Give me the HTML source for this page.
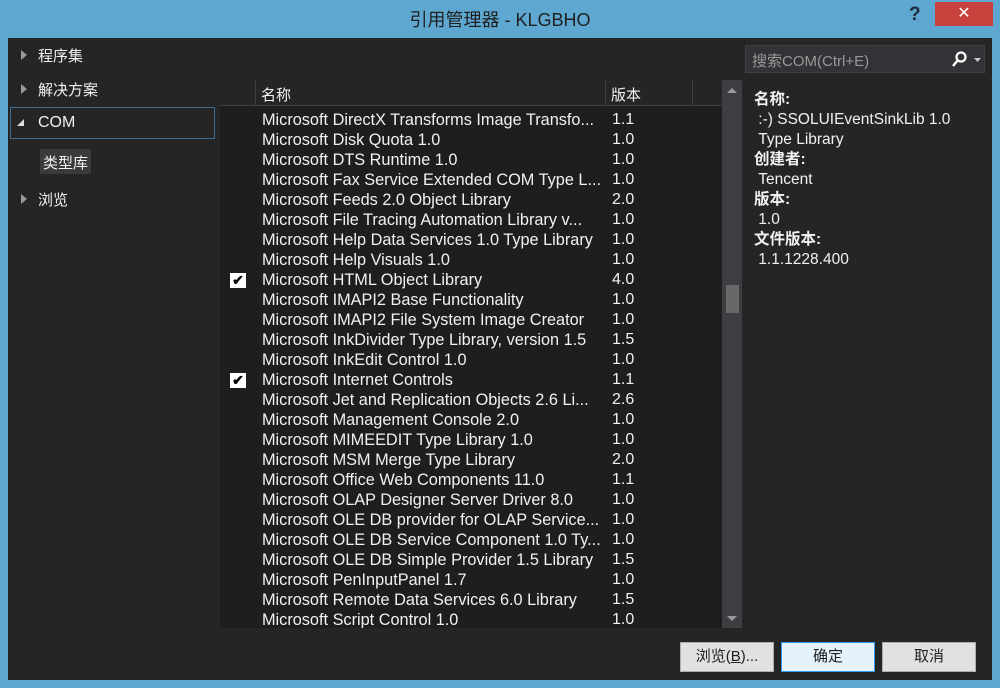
<!DOCTYPE html>
<html><head><meta charset="utf-8"><style>
*{margin:0;padding:0;box-sizing:border-box}
body{width:1000px;height:688px;background:#5ea7d1;font-family:"Liberation Sans","Noto Sans CJK SC",sans-serif;color:#f1f1f1;font-size:15px;position:relative;overflow:hidden}
.a{position:absolute;white-space:nowrap}
#main{position:absolute;left:8px;top:38px;width:984px;height:642px;background:#252526}
.row{position:absolute;left:262px;height:20px;line-height:20px;font-size:16.3px;margin-top:2px}
.v{position:absolute;left:612px;height:20px;line-height:20px;font-size:16px;margin-top:2px}
.tri{position:absolute;width:0;height:0;border-top:5px solid transparent;border-bottom:5px solid transparent;border-left:6px solid #999}
.btn{position:absolute;top:642px;height:30px;width:94px;background:#e1e1e1;color:#1e1e1e;border:1px solid #adadad;text-align:center;line-height:28px;font-size:15px}
.chk{position:absolute;left:230px;width:16px;height:15px;background:#fff;color:#000;font-size:14px;line-height:15px;text-align:center;font-weight:bold;margin-top:2px}
</style></head><body>
<div class="a" style="left:0;top:6px;width:1000px;text-align:center;font-size:18px;color:#1f1f1f">引用管理器 - KLGBHO</div>
<div class="a" style="left:909px;top:4px;font-size:19px;font-weight:bold;color:#1e2a38">?</div>
<div class="a" style="left:935px;top:2px;width:58px;height:24px;background:#c7423c;color:#fff;text-align:center;line-height:24px;font-size:16px">✕</div>
<div id="main"></div>
<div class="tri" style="left:21px;top:50px"></div><div class="a" style="left:38px;top:45px">程序集</div>
<div class="tri" style="left:21px;top:84px"></div><div class="a" style="left:38px;top:79px">解决方案</div>
<div class="a" style="left:10px;top:107px;width:205px;height:32px;border:1px solid #3e6d94"></div>
<div class="a" style="left:17px;top:119px;width:0;height:0;border-left:7px solid transparent;border-bottom:7px solid #ddd"></div>
<div class="a" style="left:38px;top:114px;font-size:16px">COM</div>
<div class="a" style="left:40px;top:149px;width:51px;height:25px;background:#3a3a3c"></div>
<div class="a" style="left:43px;top:152px">类型库</div>
<div class="tri" style="left:21px;top:194px"></div><div class="a" style="left:38px;top:189px">浏览</div>
<div class="a" style="left:220px;top:80px;width:502px;height:548px;background:#1e1e1e"></div>
<div class="a" style="left:220px;top:80px;width:502px;height:26px;background:#252526;border-bottom:1px solid #3f3f46"></div>
<div class="a" style="left:255px;top:80px;width:1px;height:26px;background:#3f3f46"></div>
<div class="a" style="left:605px;top:80px;width:1px;height:26px;background:#3f3f46"></div>
<div class="a" style="left:692px;top:80px;width:1px;height:26px;background:#3f3f46"></div>
<div class="a" style="left:261px;top:84px">名称</div>
<div class="a" style="left:611px;top:84px">版本</div>
<div class="a" style="left:722px;top:80px;width:20px;height:548px;background:#3e3e42"></div>
<div class="a" style="left:727px;top:88px;border-left:5px solid transparent;border-right:5px solid transparent;border-bottom:5px solid #999;width:0;height:0"></div>
<div class="a" style="left:727px;top:616px;border-left:5px solid transparent;border-right:5px solid transparent;border-top:5px solid #999;width:0;height:0"></div>
<div class="a" style="left:726px;top:285px;width:13px;height:28px;background:#686868"></div>
<div class="chk" style="top:271px">✔</div>
<div class="chk" style="top:371px">✔</div>
<div class="row" style="top:108px">Microsoft DirectX Transforms Image Transfo...</div><div class="v" style="top:108px">1.1</div>
<div class="row" style="top:128px">Microsoft Disk Quota 1.0</div><div class="v" style="top:128px">1.0</div>
<div class="row" style="top:148px">Microsoft DTS Runtime 1.0</div><div class="v" style="top:148px">1.0</div>
<div class="row" style="top:168px">Microsoft Fax Service Extended COM Type L...</div><div class="v" style="top:168px">1.0</div>
<div class="row" style="top:188px">Microsoft Feeds 2.0 Object Library</div><div class="v" style="top:188px">2.0</div>
<div class="row" style="top:208px">Microsoft File Tracing Automation Library v...</div><div class="v" style="top:208px">1.0</div>
<div class="row" style="top:228px">Microsoft Help Data Services 1.0 Type Library</div><div class="v" style="top:228px">1.0</div>
<div class="row" style="top:248px">Microsoft Help Visuals 1.0</div><div class="v" style="top:248px">1.0</div>
<div class="row" style="top:268px">Microsoft HTML Object Library</div><div class="v" style="top:268px">4.0</div>
<div class="row" style="top:288px">Microsoft IMAPI2 Base Functionality</div><div class="v" style="top:288px">1.0</div>
<div class="row" style="top:308px">Microsoft IMAPI2 File System Image Creator</div><div class="v" style="top:308px">1.0</div>
<div class="row" style="top:328px">Microsoft InkDivider Type Library, version 1.5</div><div class="v" style="top:328px">1.5</div>
<div class="row" style="top:348px">Microsoft InkEdit Control 1.0</div><div class="v" style="top:348px">1.0</div>
<div class="row" style="top:368px">Microsoft Internet Controls</div><div class="v" style="top:368px">1.1</div>
<div class="row" style="top:388px">Microsoft Jet and Replication Objects 2.6 Li...</div><div class="v" style="top:388px">2.6</div>
<div class="row" style="top:408px">Microsoft Management Console 2.0</div><div class="v" style="top:408px">1.0</div>
<div class="row" style="top:428px">Microsoft MIMEEDIT Type Library 1.0</div><div class="v" style="top:428px">1.0</div>
<div class="row" style="top:448px">Microsoft MSM Merge Type Library</div><div class="v" style="top:448px">2.0</div>
<div class="row" style="top:468px">Microsoft Office Web Components 11.0</div><div class="v" style="top:468px">1.1</div>
<div class="row" style="top:488px">Microsoft OLAP Designer Server Driver 8.0</div><div class="v" style="top:488px">1.0</div>
<div class="row" style="top:508px">Microsoft OLE DB provider for OLAP Service...</div><div class="v" style="top:508px">1.0</div>
<div class="row" style="top:528px">Microsoft OLE DB Service Component 1.0 Ty...</div><div class="v" style="top:528px">1.0</div>
<div class="row" style="top:548px">Microsoft OLE DB Simple Provider 1.5 Library</div><div class="v" style="top:548px">1.5</div>
<div class="row" style="top:568px">Microsoft PenInputPanel 1.7</div><div class="v" style="top:568px">1.0</div>
<div class="row" style="top:588px">Microsoft Remote Data Services 6.0 Library</div><div class="v" style="top:588px">1.5</div>
<div class="row" style="top:608px;height:18px;overflow:hidden">Microsoft Script Control 1.0</div><div class="v" style="top:608px;height:18px;overflow:hidden">1.0</div>
<div class="a" style="left:745px;top:45px;width:240px;height:28px;background:#333337;border:1px solid #3f3f46"></div>
<div class="a" style="left:752px;top:50px;color:#999;font-size:15px">搜索COM(Ctrl+E)</div>
<svg class="a" style="left:948px;top:50px" width="36" height="18"><circle cx="13" cy="7" r="4.5" fill="none" stroke="#fff" stroke-width="2.2"/><line x1="10" y1="10" x2="5" y2="16" stroke="#fff" stroke-width="2.5"/><path d="M26 8h7l-3.5 4z" fill="#ccc"/></svg>
<div class="a" style="left:754px;top:90px;line-height:20px;font-size:15.5px">
<b>名称:</b><br>&nbsp;:-) SSOLUIEventSinkLib 1.0<br>&nbsp;Type Library<br><b>创建者:</b><br>&nbsp;Tencent<br><b>版本:</b><br>&nbsp;1.0<br><b>文件版本:</b><br>&nbsp;1.1.1228.400</div>
<div class="btn" style="left:680px">浏览(<u>B</u>)...</div>
<div class="btn" style="left:781px;background:#e5f1fb;border:1px solid #3399ff">确定</div>
<div class="btn" style="left:882px">取消</div>
</body></html>
